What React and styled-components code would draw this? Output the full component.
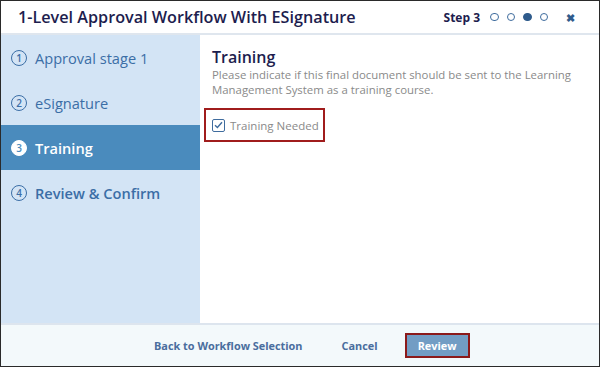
import React from 'react'
import styled, { createGlobalStyle } from 'styled-components'

const Global = createGlobalStyle`
  html, body { margin: 0; padding: 0; background: #fff; }
  body { font-family: "Open Sans", "Liberation Sans", sans-serif; }
  * { box-sizing: border-box; }
`

const Window = styled.div`
  width: 600px;
  height: 367px;
  border: 1px solid #2a2a2a;
  display: flex;
  flex-direction: column;
  background: #fff;
  overflow: hidden;
`

const Header = styled.div`
  height: 34px;
  flex: none;
  display: flex;
  align-items: center;
  padding: 0 24px 0 17px;
  border-bottom: 2px solid #dfe6ee;
`

const Title = styled.h1`
  margin: 0;
  flex: 1;
  font-size: 16.2px;
  font-weight: 600;
  color: #1d1d4e;
`

const StepLabel = styled.span`
  font-size: 12px;
  font-weight: 700;
  color: #1d1d4e;
  margin-right: 10px;
`

const Dots = styled.div`
  display: flex;
  gap: 8px;
  margin-right: 18px;
`

const Dot = styled.span`
  width: 8.5px;
  height: 8.5px;
  border-radius: 50%;
  border: 1.3px solid ${p => (p.$on ? '#2f5b8c' : '#3f6c9e')};
  background: ${p => (p.$on ? '#2f5b8c' : 'transparent')};
`

const Close = styled.span`
  font-size: 11px;
  font-weight: 700;
  color: #2f5b8c;
  line-height: 1;
`

const Body = styled.div`
  flex: 1;
  display: flex;
  min-height: 0;
`

const Sidebar = styled.nav`
  width: 199px;
  flex: none;
  background: #d3e4f5;
  display: flex;
  flex-direction: column;
`

const NavItem = styled.div`
  height: 45px;
  display: flex;
  align-items: center;
  gap: 8px;
  padding-left: 10px;
  font-size: 14.6px;
  font-weight: ${p => (p.$bold ? 600 : 400)};
  color: ${p => (p.$active ? '#ffffff' : '#3b6ea6')};
  background: ${p => (p.$active ? '#4a8bbd' : 'transparent')};
`

const NumCircle = styled.span`
  width: 16px;
  height: 16px;
  border-radius: 50%;
  flex: none;
  display: flex;
  align-items: center;
  justify-content: center;
  font-size: 10px;
  font-weight: 600;
  line-height: 1;
  border: 1.3px solid ${p => (p.$active ? '#ffffff' : '#3b6ea6')};
  background: ${p => (p.$active ? '#ffffff' : 'transparent')};
  color: ${p => (p.$active ? '#4a8bbd' : '#3b6ea6')};
`

const Main = styled.section`
  flex: 1;
  padding: 12px 12px 0 12px;
`

const Heading = styled.h2`
  margin: 0;
  font-size: 16px;
  font-weight: 600;
  color: #1d1d4e;
  line-height: 20px;
`

const Desc = styled.p`
  margin: 0;
  font-size: 11.4px;
  line-height: 15px;
  color: #8a8a8a;
  white-space: nowrap;
`

const CheckBox = styled.label`
  margin: 11px 0 0 -8px;
  width: 121px;
  height: 34px;
  border: 2px solid #a01c1c;
  display: flex;
  align-items: center;
  gap: 5px;
  padding-left: 6px;
  font-size: 11.5px;
  color: #8a8a8a;
`

const Box = styled.span`
  width: 13px;
  height: 13px;
  border: 1.3px solid #3f6c9e;
  border-radius: 2px;
  display: flex;
  align-items: center;
  justify-content: center;
`

const Footer = styled.div`
  height: 43px;
  flex: none;
  background: #f3f9fb;
  border-top: 2px solid #dde5ee;
  display: flex;
  align-items: center;
  padding-left: 153px;
`

const LinkBtn = styled.span`
  font-size: 10.9px;
  font-weight: 700;
  color: #4a6e9e;
  margin-right: ${p => p.$gap || 0}px;
`

const Primary = styled.span`
  width: 65px;
  height: 25px;
  background: #729dc4;
  border: 2px solid #8c1a1a;
  color: #ffffff;
  font-size: 10.9px;
  font-weight: 700;
  display: flex;
  align-items: center;
  justify-content: center;
`

const steps = [
  { n: 1, label: 'Approval stage 1' },
  { n: 2, label: 'eSignature' },
  { n: 3, label: 'Training', active: true, bold: true },
  { n: 4, label: 'Review & Confirm', bold: true },
]

export default function App() {
  return (
    <>
      <Global />
      <Window>
        <Header>
          <Title>1-Level Approval Workflow With ESignature</Title>
          <StepLabel>Step 3</StepLabel>
          <Dots>
            <Dot />
            <Dot />
            <Dot $on />
            <Dot />
          </Dots>
          <Close>✖</Close>
        </Header>
        <Body>
          <Sidebar>
            {steps.map(s => (
              <NavItem key={s.n} $active={s.active} $bold={s.bold}>
                <NumCircle $active={s.active}>{s.n}</NumCircle>
                {s.label}
              </NavItem>
            ))}
          </Sidebar>
          <Main>
            <Heading>Training</Heading>
            <Desc>
              Please indicate if this final document should be sent to the Learning
              <br />
              Management System as a training course.
            </Desc>
            <CheckBox>
              <Box>
                <svg width="9" height="8" viewBox="0 0 9 8">
                  <path d="M1 4.2 L3.4 6.5 L8 1.2" fill="none" stroke="#3f6c9e" strokeWidth="1.4" />
                </svg>
              </Box>
              Training Needed
            </CheckBox>
          </Main>
        </Body>
        <Footer>
          <LinkBtn $gap={39}>Back to Workflow Selection</LinkBtn>
          <LinkBtn $gap={27}>Cancel</LinkBtn>
          <Primary>Review</Primary>
        </Footer>
      </Window>
    </>
  )
}
